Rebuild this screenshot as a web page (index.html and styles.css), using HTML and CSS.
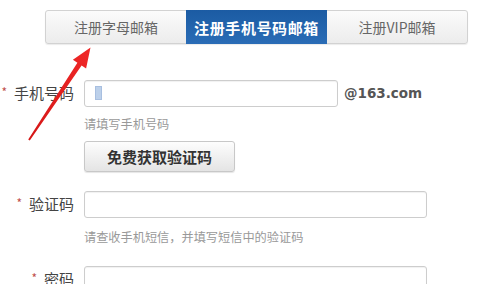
FILE: index.html
```html
<!DOCTYPE html>
<html lang="zh-CN">
<head>
<meta charset="utf-8">
<link rel="stylesheet" href="styles.css">
</head>
<body>
<div class="page">
  <div class="tabs">
    <div class="tab">注册字母邮箱</div>
    <div class="tab active">注册手机号码邮箱</div>
    <div class="tab">注册VIP邮箱</div>
  </div>

  <div class="form">
    <div class="row row-phone">
      <div class="lbl"><span class="req">*</span>手机号码</div>
      <div class="field">
        <div class="line">
          <div class="input input-short"><span class="caret"></span></div>
          <span class="domain">@163.com</span>
        </div>
        <div class="hint hint-1">请填写手机号码</div>
        <button class="btn">免费获取验证码</button>
      </div>
    </div>

    <div class="row row-code">
      <div class="lbl"><span class="req">*</span>验证码</div>
      <div class="field">
        <div class="input input-long"></div>
        <div class="hint hint-2">请查收手机短信，并填写短信中的验证码</div>
      </div>
    </div>

    <div class="row row-pass">
      <div class="lbl"><span class="req">*</span>密码</div>
      <div class="field">
        <div class="input input-long"></div>
      </div>
    </div>
  </div>

  <svg class="arrow" width="487" height="284" viewBox="0 0 487 284">
    <defs>
      <linearGradient id="ag" x1="0" y1="1" x2="1" y2="0">
        <stop offset="0" stop-color="#d41616"/>
        <stop offset="1" stop-color="#f02828"/>
      </linearGradient>
    </defs>
    <polygon fill="url(#ag)" points="28.2,139.4 29.8,140.6 81.6,65.5 86.1,68.5 90.5,47.5 72.9,59.7 77.4,62.7"/>
  </svg>
</div>
</body>
</html>
```
FILE: styles.css
```css
* { box-sizing: border-box; }
html, body { margin: 0; padding: 0; background: #fff; }
body {
  font-family: "Noto Sans CJK SC", "Noto Sans", sans-serif;
  width: 487px;
  height: 284px;
  overflow: hidden;
}
.page { position: relative; width: 487px; height: 284px; padding-top: 10px; }

.tabs {
  display: flex;
  margin-left: 45px;
  width: 423px;
  height: 34px;
  border: 1px solid #d2d2d2;
  border-radius: 3px;
  background: linear-gradient(#fbfbfb, #ececec);
  box-shadow: 0 1px 1px rgba(0,0,0,0.08);
}
.tab {
  flex: 1;
  display: flex;
  align-items: center;
  justify-content: center;
  font-size: 14px;
  color: #666;
  line-height: 1;
}
.tab.active {
  flex: 0 0 141px;
  background: linear-gradient(#1b5ba3, #2a6cb6);
  color: #fff;
  font-weight: bold;
  font-size: 15px;
  letter-spacing: 0.6px;
  margin: -1px 0;
}

.form { margin-top: 36px; }
.row { display: grid; grid-template-columns: 84px 1fr; }
.lbl {
  height: 27px;
  display: flex;
  align-items: center;
  justify-content: flex-end;
  padding-right: 10px;
  padding-bottom: 2px;
  font-size: 15px;
  color: #444;
}
.req {
  color: #c0504d;
  font-size: 12px;
  margin-right: 7px;
  position: relative;
  top: -1px;
}
.field { display: flex; flex-direction: column; align-items: flex-start; }
.line { display: flex; align-items: center; }
.input {
  height: 27px;
  border: 1px solid #cdcdcd;
  border-radius: 3px;
  background: #fff;
  box-shadow: inset 0 1px 1px rgba(0,0,0,0.06);
  position: relative;
}
.input-short { width: 254px; }
.input-long { width: 343px; }
.caret {
  position: absolute;
  left: 10px;
  top: 5px;
  width: 7px;
  height: 14px;
  background: #bcd0ea;
  border: 1px solid #a8bfe0;
}
.domain {
  margin-left: 6px;
  font-family: "DejaVu Sans", sans-serif;
  font-weight: bold;
  font-size: 13.5px;
  color: #555;
  position: relative;
  top: -1px;
}
.hint {
  font-size: 12.2px;
  color: #999;
  line-height: 16px;
}
.hint-1 { margin-top: 9px; }
.hint-2 { margin-top: 11px; }
.btn {
  margin-top: 9px;
  width: 151px;
  height: 31px;
  border: 1px solid #c8c8c8;
  border-radius: 3px;
  background: linear-gradient(#fdfdfd, #e4e4e4);
  font-family: "Noto Sans CJK SC", sans-serif;
  font-weight: bold;
  font-size: 15px;
  color: #333;
  padding: 0;
  box-shadow: 0 1px 1px rgba(0,0,0,0.1);
}
.row-code { margin-top: 19px; }
.row-pass { margin-top: 21px; }

.arrow { position: absolute; left: 0; top: 0; pointer-events: none; }
```
